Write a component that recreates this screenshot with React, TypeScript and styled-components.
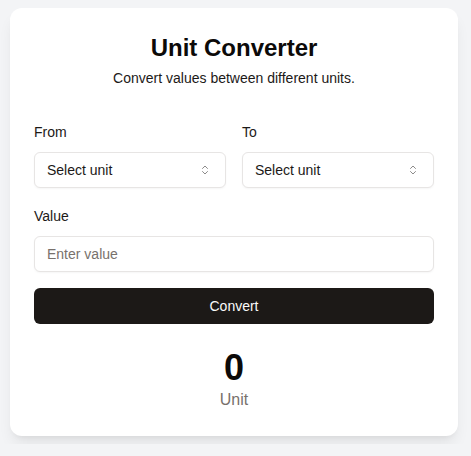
import React from "react";
import styled, { createGlobalStyle } from "styled-components";
import { ChevronsUpDown } from "lucide-react";

const GlobalStyle = createGlobalStyle`
  * { box-sizing: border-box; }
  html, body {
    margin: 0;
    background: #f3f4f6;
    font-family: "Liberation Sans", Arial, sans-serif;
    color: #0c0a09;
  }
`;

const Page = styled.div`
  padding: 8px 10px;
  display: flex;
  justify-content: flex-start;
`;

const Card = styled.div`
  width: 448px;
  background: #ffffff;
  border-radius: 12px;
  padding: 24px 24px 25px;
  box-shadow: 0 10px 15px -3px rgba(0, 0, 0, 0.08), 0 4px 6px -4px rgba(0, 0, 0, 0.08);
  display: flex;
  flex-direction: column;
`;

const Title = styled.h1`
  margin: 0;
  font-size: 24px;
  line-height: 32px;
  font-weight: 700;
  text-align: center;
  color: #0c0a09;
`;

const Subtitle = styled.p`
  margin: 4px 0 0;
  font-size: 14px;
  line-height: 20px;
  text-align: center;
  color: #1c1917;
`;

const Row = styled.div`
  display: grid;
  grid-template-columns: 1fr 1fr;
  gap: 16px;
  margin-top: 34px;
`;

const Field = styled.div<{ $top?: number }>`
  display: flex;
  flex-direction: column;
  gap: 10px;
  margin-top: ${({ $top }) => $top ?? 0}px;
`;

const Label = styled.label`
  font-size: 14px;
  line-height: 20px;
  color: #1c1917;
`;

const SelectBox = styled.button`
  height: 36px;
  width: 100%;
  display: flex;
  align-items: center;
  justify-content: space-between;
  padding: 0 12px;
  border: 1px solid #e7e5e4;
  border-radius: 6px;
  background: #ffffff;
  font-family: inherit;
  font-size: 14px;
  color: #1c1917;
  box-shadow: 0 1px 2px rgba(0, 0, 0, 0.04);

  svg {
    opacity: 0.5;
    margin-right: 2px;
  }
`;

const Input = styled.input`
  height: 36px;
  width: 100%;
  padding: 0 12px;
  border: 1px solid #e7e5e4;
  border-radius: 6px;
  font-family: inherit;
  font-size: 14px;
  color: #1c1917;
  box-shadow: 0 1px 2px rgba(0, 0, 0, 0.04);
  outline: none;

  &::placeholder {
    color: #78716c;
  }
`;

const ConvertButton = styled.button`
  margin-top: 16px;
  height: 36px;
  width: 100%;
  border: none;
  border-radius: 6px;
  background: #1c1917;
  color: #fafaf9;
  font-family: inherit;
  font-size: 14px;
  font-weight: 500;
`;

const Result = styled.div`
  margin-top: 24px;
  display: flex;
  flex-direction: column;
  align-items: center;
`;

const ResultValue = styled.div`
  font-size: 36px;
  line-height: 40px;
  font-weight: 700;
  color: #0c0a09;
`;

const ResultUnit = styled.div`
  font-size: 16px;
  line-height: 23px;
  color: #78716c;
`;

const UnitSelect: React.FC = () => (
  <SelectBox type="button">
    <span>Select unit</span>
    <ChevronsUpDown size={12} strokeWidth={2} />
  </SelectBox>
);

export default function App() {
  return (
    <>
      <GlobalStyle />
      <Page>
        <Card>
          <Title>Unit Converter</Title>
          <Subtitle>Convert values between different units.</Subtitle>
          <Row>
            <Field>
              <Label>From</Label>
              <UnitSelect />
            </Field>
            <Field>
              <Label>To</Label>
              <UnitSelect />
            </Field>
          </Row>
          <Field $top={18}>
            <Label>Value</Label>
            <Input placeholder="Enter value" />
          </Field>
          <ConvertButton>Convert</ConvertButton>
          <Result>
            <ResultValue>0</ResultValue>
            <ResultUnit>Unit</ResultUnit>
          </Result>
        </Card>
      </Page>
    </>
  );
}
